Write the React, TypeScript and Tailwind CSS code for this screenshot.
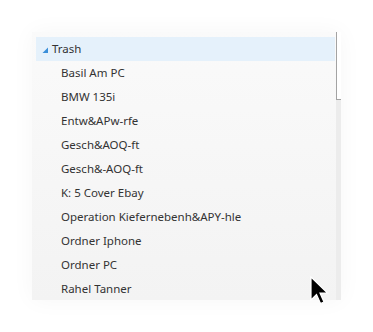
import React from 'react';

const folders = [
  'Basil Am PC',
  'BMW 135i',
  'Entw&APw-rfe',
  'Gesch&AOQ-ft',
  'Gesch&-AOQ-ft',
  'K: 5 Cover Ebay',
  'Operation Kiefernebenh&APY-hle',
  'Ordner Iphone',
  'Ordner PC',
  'Rahel Tanner',
];

function Cursor() {
  return (
    <svg
      className="absolute left-[309px] top-[276px]"
      width="22"
      height="32"
      viewBox="0 0 22 32"
    >
      <path
        d="M2 1 L2 24 L7.5 18.5 L11.5 27.5 L15 26 L11 17 L18.5 17 Z"
        fill="#000"
        stroke="#fff"
        strokeWidth="1.2"
        strokeLinejoin="miter"
      />
    </svg>
  );
}

export default function App() {
  return (
    <div
      className="relative w-[373px] h-[332px] bg-white overflow-hidden"
      style={{ fontFamily: '"Noto Sans", "Open Sans", sans-serif' }}
    >
      <div className="absolute left-[32px] top-[32px] w-[309px] h-[268px] shadow-[0_0_22px_rgba(0,0,0,0.04)]" />
      <div className="relative mt-[32px] ml-[32px] w-[309px] h-[268px] flex overflow-hidden">
        <div className="flex-1 bg-gradient-to-b from-[#fafafa] to-[#f3f3f3] pt-[5px] pl-[4px] pr-[1px]">
          <div className="h-[24px] bg-[#e5f1fb] flex items-center">
            <svg width="16" height="24" viewBox="0 0 16 24" className="shrink-0">
              <path d="M6.5 16 L12 16 L12 10.5 Z" fill="#3a8fd9" />
            </svg>
            <span className="text-[11.5px] text-[#333] leading-none">Trash</span>
          </div>
          {folders.map((f) => (
            <div key={f} className="h-[24px] flex items-center pl-[25px]">
              <span className="text-[11.5px] text-[#333] leading-none whitespace-nowrap">{f}</span>
            </div>
          ))}
        </div>
        <div className="w-[5px] flex flex-col">
          <div className="h-[67px] bg-white border-l border-[#a3a3a3]" />
          <div className="flex-1 bg-[#ececec] border-t border-[#a3a3a3]" />
        </div>
      </div>
      <Cursor />
    </div>
  );
}
